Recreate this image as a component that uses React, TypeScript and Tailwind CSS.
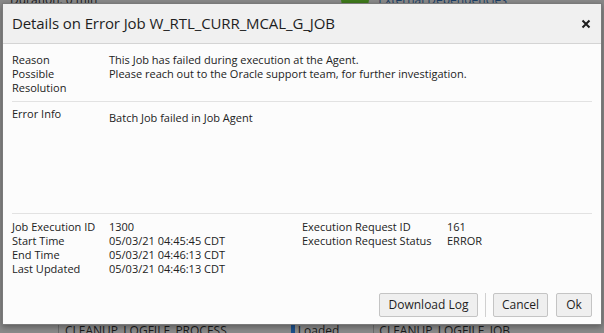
export default function App() {
  const font = { fontFamily: '"Open Sans", "Noto Sans", sans-serif' };
  const leftRows = [
    ['Job Execution ID', '1300'],
    ['Start Time', '05/03/21 04:45:45 CDT'],
    ['End Time', '05/03/21 04:46:13 CDT'],
    ['Last Updated', '05/03/21 04:46:13 CDT'],
  ];
  const rightRows = [
    ['Execution Request ID', '161'],
    ['Execution Request Status', 'ERROR'],
  ];

  return (
    <div className="relative w-[604px] h-[333px] overflow-hidden bg-[#8a8a8a] text-[#222]" style={font}>
      {/* page behind the overlay */}
      <div className="flex items-center h-[8px] -mt-[4px] text-[12px] text-[#1a1a1a]">
        <span className="ml-[10px]">Duration: 0 min</span>
        <span className="ml-[244px] w-[28px] h-[14px] rounded-full bg-[#3f7a1c]" />
        <span className="ml-[9px] text-[#1c3f66]">External Dependencies</span>
      </div>
      <div className="absolute left-0 right-0 bottom-0 h-[8px] flex items-start text-[12px] text-[#1a1a1a]">
        <span className="ml-[58px] h-[8px] border-l border-[#6c6c6c]" />
        <span className="ml-[6px] leading-[12px]">CLEANUP_LOGFILE_PROCESS</span>
        <span className="ml-[64px] w-[4px] h-[8px] bg-[#1d4f8a]" />
        <span className="ml-[3px] leading-[12px]">Loaded</span>
        <span className="ml-[34px] h-[8px] border-l border-[#6c6c6c]" />
        <span className="ml-[5px] leading-[12px]">CLEANUP_LOGFILE_JOB</span>
      </div>

      {/* dialog */}
      <div className="absolute left-[2px] top-[3px] w-[600px] h-[322px] bg-[#fcfcfc] border border-[#7a7a7a] shadow-[0_2px_6px_rgba(0,0,0,0.35)] flex flex-col">
        <div className="h-[40px] shrink-0 bg-[#f0f0f0] border-b border-[#d4d4d4] flex items-center justify-between pl-[9px] pr-[10px]">
          <span className="text-[15px] text-[#1e1e1e] tracking-[-0.1px]">Details on Error Job W_RTL_CURR_MCAL_G_JOB</span>
          <svg width="10" height="10" viewBox="0 0 10 10" className="mt-[1px]">
            <path d="M1.5 1.5 L8.5 8.5 M8.5 1.5 L1.5 8.5" stroke="#1e1e1e" strokeWidth="2" />
          </svg>
        </div>

        <div className="flex flex-col px-[9px] text-[11px] leading-[14px] flex-1">
          <div className="pt-[9px] pb-[6px] border-b border-[#e2e2e2]">
            <div className="flex">
              <span className="w-[97px] shrink-0">Reason</span>
              <span>This Job has failed during execution at the Agent.</span>
            </div>
            <div className="flex">
              <span className="w-[97px] shrink-0">Possible<br />Resolution</span>
              <span>Please reach out to the Oracle support team, for further investigation.</span>
            </div>
          </div>

          <div className="flex h-[112px] border-b border-[#e2e2e2] pt-[5px]">
            <span className="w-[97px] shrink-0">Error Info</span>
            <span className="mt-[4px]">Batch Job failed in Job Agent</span>
          </div>

          <div className="flex pt-[6px]">
            <div className="w-[290px] flex flex-col">
              {leftRows.map(([k, v]) => (
                <div key={k} className="flex">
                  <span className="w-[97px] shrink-0">{k}</span>
                  <span>{v}</span>
                </div>
              ))}
            </div>
            <div className="flex flex-col">
              {rightRows.map(([k, v]) => (
                <div key={k} className="flex">
                  <span className="w-[145px] shrink-0">{k}</span>
                  <span>{v}</span>
                </div>
              ))}
            </div>
          </div>

          <div className="mt-auto mb-[7px] flex justify-end items-center text-[12px]">
            <button className="h-[24px] w-[99px] bg-[#efefef] border border-[#c4c4c4] rounded-[2px] text-[#1e1e1e]">Download Log</button>
            <span className="mx-[7px] h-[24px] border-l border-[#d0d0d0]" />
            <button className="h-[24px] w-[55px] bg-[#efefef] border border-[#c4c4c4] rounded-[2px] text-[#1e1e1e]">Cancel</button>
            <button className="ml-[8px] h-[24px] w-[36px] bg-[#efefef] border border-[#c4c4c4] rounded-[2px] text-[#1e1e1e]">Ok</button>
          </div>
        </div>
      </div>
    </div>
  );
}
